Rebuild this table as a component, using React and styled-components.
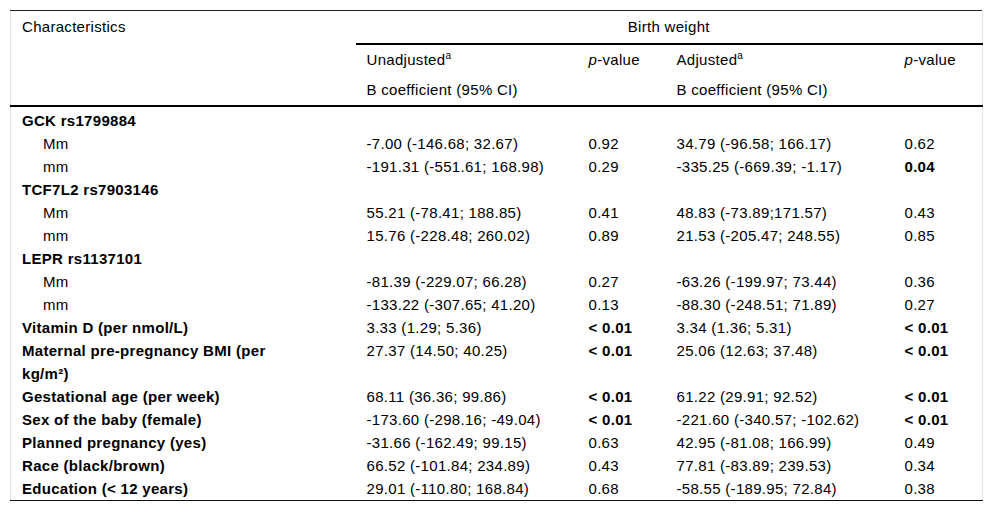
import React from 'react';
import styled, { createGlobalStyle } from 'styled-components';

const GlobalStyle = createGlobalStyle`
    body {
        margin: 0;
        background: #fff;
        font-family: "Liberation Sans", Arial, Helvetica, sans-serif;
        color: #000;
    }
`;

const Page = styled.div`
    padding: 10px;
`;

const Table = styled.table`
    width: 972px;
    border-collapse: collapse;
    table-layout: fixed;
    font-size: 15px;
    letter-spacing: 0.3px;
    line-height: 22px;
    border-top: 1px solid #222;
    border-bottom: 1px solid #111;
    border-left: 1px solid #e4e4e4;
    border-right: 1px solid #e4e4e4;
`;

const HeadCell = styled.th`
    font-weight: normal;
    text-align: ${props => (props.center ? 'center' : 'left')};
    vertical-align: top;
    padding: ${props => (props.tight ? '4px' : '5px')} 11px;
    border-bottom: ${props => (props.rule ? '2px solid #000' : 'none')};
`;

const Cell = styled.td`
    vertical-align: top;
    line-height: 23px;
    padding: ${props => (props.first ? '2px' : '0')} 11px 0 ${props => (props.indent ? '32px' : '11px')};
    padding-right: ${props => (props.wide ? '70px' : '11px')};
    font-weight: ${props => (props.bold ? 'bold' : 'normal')};
`;

const HeadRow = styled.tr`
    border-bottom: ${props => (props.rule ? '2px solid #000' : 'none')};
`;

const Sup = styled.sup`
    font-size: 10px;
    line-height: 0;
    letter-spacing: 0;
    vertical-align: 0;
    position: relative;
    top: -6px;
`;

const P = styled.i`
    font-style: italic;
`;

const rows = [
    { label: 'GCK rs1799884', group: true },
    { label: 'Mm', sub: true, u: '-7.00 (-146.68; 32.67)', up: '0.92', a: '34.79 (-96.58; 166.17)', ap: '0.62' },
    { label: 'mm', sub: true, u: '-191.31 (-551.61; 168.98)', up: '0.29', a: '-335.25 (-669.39; -1.17)', ap: '0.04', apBold: true },
    { label: 'TCF7L2 rs7903146', group: true },
    { label: 'Mm', sub: true, u: '55.21 (-78.41; 188.85)', up: '0.41', a: '48.83 (-73.89;171.57)', ap: '0.43' },
    { label: 'mm', sub: true, u: '15.76 (-228.48; 260.02)', up: '0.89', a: '21.53 (-205.47; 248.55)', ap: '0.85' },
    { label: 'LEPR rs1137101', group: true },
    { label: 'Mm', sub: true, u: '-81.39 (-229.07; 66.28)', up: '0.27', a: '-63.26 (-199.97; 73.44)', ap: '0.36' },
    { label: 'mm', sub: true, u: '-133.22 (-307.65; 41.20)', up: '0.13', a: '-88.30 (-248.51; 71.89)', ap: '0.27' },
    { label: 'Vitamin D (per nmol/L)', group: true, u: '3.33 (1.29; 5.36)', up: '< 0.01', upBold: true, a: '3.34 (1.36; 5.31)', ap: '< 0.01', apBold: true },
    { label: 'Maternal pre-pregnancy BMI (per kg/m²)', group: true, u: '27.37 (14.50; 40.25)', up: '< 0.01', upBold: true, a: '25.06 (12.63; 37.48)', ap: '< 0.01', apBold: true },
    { label: 'Gestational age (per week)', group: true, u: '68.11 (36.36; 99.86)', up: '< 0.01', upBold: true, a: '61.22 (29.91; 92.52)', ap: '< 0.01', apBold: true },
    { label: 'Sex of the baby (female)', group: true, u: '-173.60 (-298.16; -49.04)', up: '< 0.01', upBold: true, a: '-221.60 (-340.57; -102.62)', ap: '< 0.01', apBold: true },
    { label: 'Planned pregnancy (yes)', group: true, u: '-31.66 (-162.49; 99.15)', up: '0.63', a: '42.95 (-81.08; 166.99)', ap: '0.49' },
    { label: 'Race (black/brown)', group: true, u: '66.52 (-101.84; 234.89)', up: '0.43', a: '77.81 (-83.89; 239.53)', ap: '0.34' },
    { label: 'Education (< 12 years)', group: true, u: '29.01 (-110.80; 168.84)', up: '0.68', a: '-58.55 (-189.95; 72.84)', ap: '0.38' },
];

export default function App() {
    return (
        <Page>
            <GlobalStyle />
            <Table>
                <colgroup>
                    <col style={{ width: 345 }} />
                    <col style={{ width: 222 }} />
                    <col style={{ width: 88 }} />
                    <col style={{ width: 228 }} />
                    <col style={{ width: 89 }} />
                </colgroup>
                <thead>
                    <tr>
                        <HeadCell rowSpan={3}>Characteristics</HeadCell>
                        <HeadCell colSpan={4} center rule>Birth weight</HeadCell>
                    </tr>
                    <tr>
                        <HeadCell tight>Unadjusted<Sup>a</Sup></HeadCell>
                        <HeadCell tight><P>p</P>-value</HeadCell>
                        <HeadCell tight>Adjusted<Sup>a</Sup></HeadCell>
                        <HeadCell tight><P>p</P>-value</HeadCell>
                    </tr>
                    <HeadRow rule>
                        <HeadCell tight>B coefficient (95% CI)</HeadCell>
                        <HeadCell tight />
                        <HeadCell tight>B coefficient (95% CI)</HeadCell>
                        <HeadCell tight />
                    </HeadRow>
                </thead>
                <tbody>
                    {rows.map((r, i) => (
                        <tr key={i}>
                            <Cell first={i === 0} bold={r.group} indent={r.sub} wide>{r.label}</Cell>
                            <Cell first={i === 0}>{r.u}</Cell>
                            <Cell first={i === 0} bold={r.upBold}>{r.up}</Cell>
                            <Cell first={i === 0}>{r.a}</Cell>
                            <Cell first={i === 0} bold={r.apBold}>{r.ap}</Cell>
                        </tr>
                    ))}
                </tbody>
            </Table>
        </Page>
    );
}
